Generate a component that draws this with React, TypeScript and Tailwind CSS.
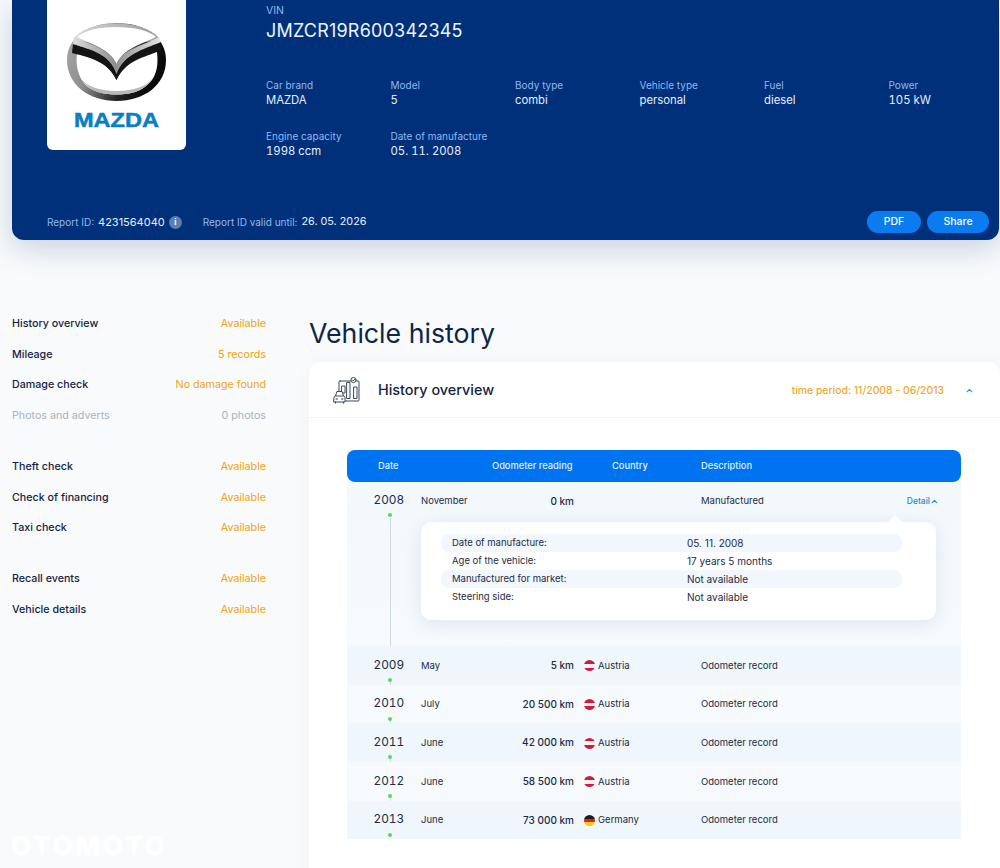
const specs = [
  ["Car brand", "MAZDA"],
  ["Model", "5"],
  ["Body type", "combi"],
  ["Vehicle type", "personal"],
  ["Fuel", "diesel"],
  ["Power", "105 kW"],
  ["Engine capacity", "1998 ccm"],
  ["Date of manufacture", "05. 11. 2008"],
];

const sideGroups = [
  [
    ["History overview", "Available"],
    ["Mileage", "5 records"],
    ["Damage check", "No damage found"],
    ["Photos and adverts", "0 photos"],
  ],
  [
    ["Theft check", "Available"],
    ["Check of financing", "Available"],
    ["Taxi check", "Available"],
  ],
  [
    ["Recall events", "Available"],
    ["Vehicle details", "Available"],
  ],
];

const records = [
  { year: "2009", month: "May", km: "5 km", country: "Austria" },
  { year: "2010", month: "July", km: "20 500 km", country: "Austria" },
  { year: "2011", month: "June", km: "42 000 km", country: "Austria" },
  { year: "2012", month: "June", km: "58 500 km", country: "Austria" },
  { year: "2013", month: "June", km: "73 000 km", country: "Germany" },
];

const details = [
  ["Date of manufacture:", "05. 11. 2008"],
  ["Age of the vehicle:", "17 years 5 months"],
  ["Manufactured for market:", "Not available"],
  ["Steering side:", "Not available"],
];

function MazdaLogo() {
  return (
    <svg width="100" height="112" viewBox="67 22 100 112">
      <defs>
        <linearGradient id="ring" x1="0" y1="0" x2="1" y2="0.35">
          <stop offset="0" stopColor="#cfcfcf" />
          <stop offset="0.12" stopColor="#a2a2a2" />
          <stop offset="0.4" stopColor="#8c8c8c" />
          <stop offset="0.75" stopColor="#222" />
          <stop offset="1" stopColor="#0a0a0a" />
        </linearGradient>
        <linearGradient id="ringTop" x1="0" y1="0" x2="1" y2="0">
          <stop offset="0" stopColor="#d8d8d8" />
          <stop offset="1" stopColor="#9a9a9a" />
        </linearGradient>
        <linearGradient id="wing" x1="0" y1="0" x2="1" y2="0">
          <stop offset="0" stopColor="#dcdcdc" />
          <stop offset="0.48" stopColor="#8f8f8f" />
          <stop offset="1" stopColor="#e6e6e6" />
        </linearGradient>
      </defs>
      <path d="M116.5 23C146 23 166 38 166 60C166 85 144 101 116.5 101C89 101 67 85 67 60C67 38 87 23 116.5 23Z" fill="url(#ring)" />
      <path d="M116.5 23.5C140 23.5 156 32 160 40L116.5 46L73 40C77 32 93 23.5 116.5 23.5Z" fill="url(#ringTop)" />
      <path d="M116.5 27C135 27 150 31 156 37C142 44 124 48 116.5 64C109 48 91 44 77 37C83 31 98 27 116.5 27Z" fill="#fff" />
      <path d="M77 54C92 58 108 62 116.5 80C125 62 141 58 157 52C159 70 155 82 140 90C128 96 105 96 93 90C80 84 75 68 77 54Z" fill="#fff" />
      <path d="M93 90C105 96 128 96 140 90C146 87 150 83 153 78C147 86 134 91 116.5 91C99 91 86 86 81 78C84 83 88 87 93 90Z" fill="#b8b8b8" />
      <path d="M73 44C92 50 110 54 116.5 74C124 54 142 50 161 42L162 50C140 56 125 62 116.5 80C108 62 92 58 72 53Z" fill="#141414" />
      <path d="M74 37C90 46 110 48 116.5 64C124 48 143 46 159 37L161 42C142 50 124 54 116.5 74C110 54 92 50 73 44Z" fill="url(#wing)" />
      <text x="116.5" y="127" textAnchor="middle" textLength="85" lengthAdjust="spacingAndGlyphs" fill="#0a7fc4" stroke="#0a7fc4" strokeWidth="0.5" fontSize="19.5" fontWeight="700" fontFamily="'Liberation Sans', sans-serif">MAZDA</text>
    </svg>
  );
}

function HistoryIcon() {
  return (
    <svg width="28" height="27" viewBox="0 0 28 27" fill="none" stroke="#3b4658" strokeWidth="1" strokeLinejoin="round" strokeLinecap="round">
      <rect x="6" y="4" width="20" height="20" rx="1" />
      <rect x="9" y="9" width="3" height="7" />
      <rect x="14" y="5.5" width="3" height="16" />
      <rect x="21" y="10" width="3" height="11.5" />
      <circle cx="20.5" cy="3" r="2.6" fill="#fff" />
      <path d="M19.3 3l.9.9 1.5-1.6" />
      <path d="M2.5 19l1.4-4.5h5.2L10.5 19" fill="#fff" />
      <path d="M1 20.5A1.5 1.5 0 0 1 2.5 19h8a1.5 1.5 0 0 1 1.5 1.5V25H1z" fill="#fff" />
      <path d="M2.5 25v1.2M10.5 25v1.2M3 22h1.6M8.4 22H10" />
    </svg>
  );
}

function ChevronUp({ className }: { className: string }) {
  return (
    <svg className={className} viewBox="0 0 10 6" fill="none" stroke="currentColor" strokeWidth="1.5" strokeLinecap="round" strokeLinejoin="round">
      <path d="M1.5 4.8 5 1.5l3.5 3.3" />
    </svg>
  );
}

function Flag({ country }: { country: string }) {
  const stripes =
    country === "Germany"
      ? ["bg-[#1c1c1c]", "bg-[#d8232a]", "bg-[#f6c615]"]
      : ["bg-[#d01c3c]", "bg-[#f7f3f3]", "bg-[#d01c3c]"];
  return (
    <span className="flex h-[11px] w-[11px] flex-col overflow-hidden rounded-full">
      {stripes.map((s, i) => (
        <span key={i} className={`flex-1 ${s}`} />
      ))}
    </span>
  );
}

function Dot({ className }: { className: string }) {
  return <span className={`absolute left-[41px] h-[4px] w-[4px] rounded-full bg-[#63d15f] ${className}`} />;
}

export default function App() {
  return (
    <div className="relative h-[868px] w-[1000px] overflow-hidden bg-[#f8fafb] font-['Inter',sans-serif] text-[#1c2b45]">
      {/* report header */}
      <div className="ml-3 mr-px flex h-[240px] flex-col rounded-b-xl bg-[#00307a] pl-[35px] pr-[10px] shadow-[0_8px_30px_rgba(0,48,122,0.2)]">
        <div className="flex flex-1">
          <div className="flex h-[150px] w-[139px] shrink-0 items-start justify-center rounded-b-md bg-white pl-px pt-[22px]">
            <MazdaLogo />
          </div>
          <div className="ml-[80px] w-[747px] shrink-0">
            <div className="pt-[4px] text-[10.5px] leading-[13px] text-[#8fb9f2]">VIN</div>
            <div className="mt-[2px] text-[18px] leading-[24px] tracking-[0.2px] text-[#eef4fc]">JMZCR19R600342345</div>
            <div className="mt-[35px] grid grid-cols-6 gap-y-[21px]">
              {specs.map(([label, value]) => (
                <div key={label}>
                  <div className="text-[10px] leading-[15px] text-[#8fb9f2]">{label}</div>
                  <div className="text-[11.3px] leading-[15px] tabular-nums text-[#e6effb]">{value}</div>
                </div>
              ))}
            </div>
          </div>
        </div>
        <div className="flex h-[29px] items-start justify-between pb-[7px]">
          <div className="flex items-center pt-[4px] text-[10px] leading-[14px] text-[#8fb9f2]">
            <span>Report ID:</span>
            <span className="ml-[4px] text-[11px] text-[#e6effb]">4231564040</span>
            <span className="ml-[4px] flex h-[13px] w-[13px] items-center justify-center rounded-full bg-[#5d7fb0] text-[8px] font-bold text-white">i</span>
            <span className="ml-[21px]">Report ID valid until:</span>
            <span className="ml-[4px] text-[10.8px] text-[#e6effb]">26. 05. 2026</span>
          </div>
          <div className="flex gap-[6px]">
            <button className="h-[22px] w-[54px] rounded-full bg-[#0a7cf0] text-[10.5px] font-medium text-white">PDF</button>
            <button className="h-[22px] w-[62px] rounded-full bg-[#0a7cf0] text-[10.5px] font-medium text-white">Share</button>
          </div>
        </div>
      </div>

      <div className="mt-[67px] flex pl-3">
        {/* side menu */}
        <div className="flex w-[254px] shrink-0 flex-col gap-[20.5px] pt-[2px]">
          {sideGroups.map((group, g) => (
            <div key={g}>
              {group.map(([label, value]) => {
                const off = label === "Photos and adverts";
                return (
                  <div key={label} className="flex h-[30.6px] items-center justify-between text-[10.7px]">
                    <span className={off ? "text-[#a9b3bf]" : "font-medium text-[#14233f]"}>{label}</span>
                    <span className={off ? "text-[#a9b3bf]" : "text-[#f0a214]"}>{value}</span>
                  </div>
                );
              })}
            </div>
          ))}
        </div>

        {/* main column */}
        <div className="ml-[43px] flex-1">
          <h1 className="text-[26.7px] font-normal leading-[52px] text-[#0f2547]">Vehicle history</h1>
          <div className="mt-[3px] h-[520px] rounded-xl bg-white shadow-[0_0_16px_rgba(0,48,122,0.04)]">
            <div className="flex h-[56px] items-center border-b border-[#f1f4f7] pl-[24px] pr-[27px] pt-px">
              <HistoryIcon />
              <span className="ml-[17px] text-[14.4px] font-medium text-[#14233f]">History overview</span>
              <span className="ml-auto pt-px text-[10.4px] font-medium text-[#efa72e]">time period: 11/2008 - 06/2013</span>
              <ChevronUp className="ml-[22px] h-[5px] w-[7px] text-[#2b8fd8]" />
            </div>

            <div className="ml-[38px] mt-[32px] w-[614px]">
              <div className="flex h-[32px] items-center rounded-lg bg-[#0074f0] pb-px text-[9.3px] font-medium text-[#dff0ff]">
                <span className="ml-[31px] w-[114px]">Date</span>
                <span className="w-[120px]">Odometer reading</span>
                <span className="w-[89px]">Country</span>
                <span>Description</span>
              </div>

              <div className="relative h-[164px] bg-gradient-to-b from-[#f2f8fc] to-[#f6fafd] text-[9.5px]">
                <div className="flex h-[38px] items-center">
                  <span className="w-[74px] pl-[26.5px] text-[11.8px] tabular-nums">2008</span>
                  <span className="w-[79px] pt-px">November</span>
                  <span className="w-[74px] text-right text-[10px] font-medium">0 km</span>
                  <span className="ml-[127px] pt-px">Manufactured</span>
                  <span className="ml-[143px] flex items-center gap-[1px] text-[8.5px] font-medium text-[#2a86d6]">
                    Detail <ChevronUp className="h-[5px] w-[7px]" />
                  </span>
                </div>
                <Dot className="top-[31px]" />
                <span className="absolute left-[42.5px] top-[36px] h-[137px] w-px bg-[#cfdde3]" />
                <div className="relative ml-[74px] mt-[2px] h-[98px] w-[515px] rounded-[10px] bg-white px-[20px] pt-[12px] shadow-[0_4px_18px_rgba(0,48,122,0.1)]">
                  <span className="absolute right-[36px] top-[-5px] h-[10px] w-[10px] rotate-45 bg-white" />
                  {details.map(([label, value], i) => (
                    <div key={label} className={`flex h-[18px] w-[461px] items-center rounded-lg pl-[11px] ${i % 2 === 0 ? "bg-[#f1f7fc]" : ""}`}>
                      <span className="w-[235px] pt-px">{label}</span>
                      <span className="text-[10px]">{value}</span>
                    </div>
                  ))}
                </div>
              </div>

              {records.map((r, i) => (
                <div key={r.year} className={`relative flex h-[38.7px] items-center text-[9.5px] ${i % 2 === 0 ? "bg-[#eff6fc]" : "bg-[#f6fafd]"}`}>
                  <span className="w-[74px] pl-[26.5px] text-[11.8px] tabular-nums">{r.year}</span>
                  <span className="w-[79px] pt-px">{r.month}</span>
                  <span className="w-[74px] whitespace-nowrap text-right text-[10px] font-medium">{r.km}</span>
                  <span className="ml-[10px] flex w-[117px] items-center gap-[3px] pt-px">
                    <Flag country={r.country} />
                    {r.country}
                  </span>
                  <span className="pt-px">Odometer record</span>
                  <Dot className="top-[32px]" />
                  {i < records.length - 1 && <span className="absolute left-[42.5px] top-[36px] h-[9px] w-px bg-[#cfdde3]" />}
                </div>
              ))}
            </div>
          </div>
        </div>
      </div>

      {/* watermark */}
      <div className="absolute bottom-[7px] left-[11px] text-[26px] font-bold leading-[30px] tracking-[3px] text-white [text-shadow:0_0_3px_#fff]">OTOMOTO</div>
    </div>
  );
}
